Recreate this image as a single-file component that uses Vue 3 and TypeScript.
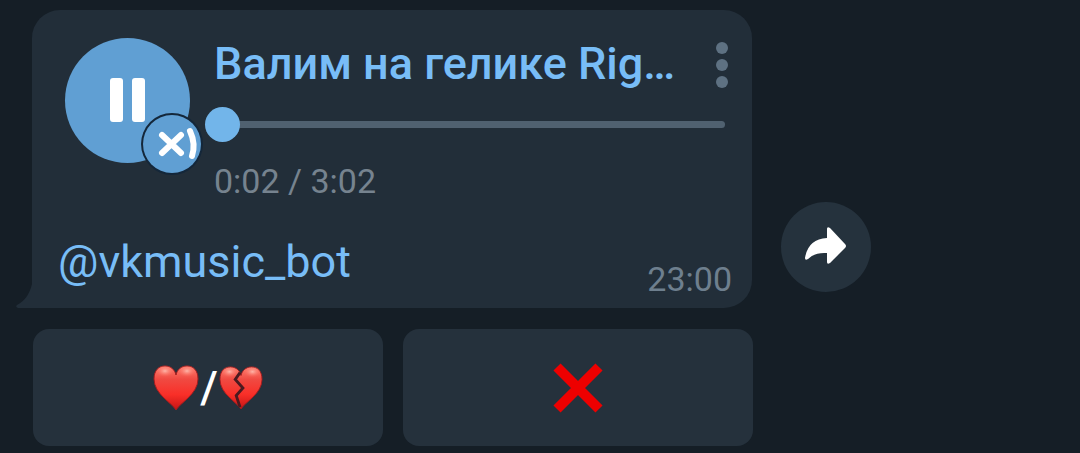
<script setup lang="ts">
import { computed, ref } from 'vue'

const elapsed = ref(2)
const duration = 182

const clock = (s: number): string =>
  `${Math.floor(s / 60)}:${String(s % 60).padStart(2, '0')}`

const progress = computed(() => `${clock(elapsed.value)} / ${clock(duration)}`)
</script>

<template>
  <main class="chat">
    <div class="message-row">
      <article class="bubble">
        <svg class="tail" viewBox="0 0 17 36" aria-hidden="true">
          <path d="M17 0 V36 H2 Q-1 35 1 33 C9 29 14 21 16 12 V0 Z" />
        </svg>
        <div class="player">
          <div class="cover">
            <button class="play" type="button" aria-label="Pause">
              <svg viewBox="0 0 125 125" aria-hidden="true">
                <rect x="45" y="40" width="13" height="44" rx="3" />
                <rect x="67" y="40" width="13" height="44" rx="3" />
              </svg>
            </button>
            <button class="badge" type="button" aria-label="Cancel download">
              <svg viewBox="0 0 58 58" aria-hidden="true">
                <path d="M19 20 L38 38 M38 20 L19 38" />
                <path d="M47 16 Q53 29 49 41" />
              </svg>
            </button>
          </div>
          <div class="track">
            <div class="heading">
              <h1 class="title">Валим на гелике Rig…</h1>
              <button class="more" type="button" aria-label="More">
                <i></i><i></i><i></i>
              </button>
            </div>
            <input
              v-model.number="elapsed"
              class="seek"
              type="range"
              min="0"
              :max="duration"
              aria-label="Position"
            />
            <p class="progress">{{ progress }}</p>
          </div>
        </div>
        <div class="footer">
          <a class="mention" href="#vkmusic_bot">@vkmusic_bot</a>
          <time class="sent">23:00</time>
        </div>
      </article>
      <button class="forward" type="button" aria-label="Forward">
        <svg viewBox="0 0 90 90" aria-hidden="true">
          <path d="M46 27 Q46 24 49 26 L64 42 Q66 44 64 46 L49 61 Q46 63 46 60 V51 Q34 50 27 57 Q24 59 24 56 Q27 37 46 36 Z" />
        </svg>
      </button>
    </div>
    <div class="keyboard">
      <button class="key" type="button" aria-label="Like or dislike">
        <svg class="heart" viewBox="0 0 46 46" aria-hidden="true">
          <defs>
            <linearGradient id="heart-fill" x1="0" y1="0" x2="0" y2="1">
              <stop offset="0" stop-color="#ff7f70" />
              <stop offset="0.3" stop-color="#f04a42" />
              <stop offset="0.65" stop-color="#f92f28" />
              <stop offset="1" stop-color="#c51414" />
            </linearGradient>
            <radialGradient id="heart-shine">
              <stop offset="0" stop-color="#ffc9bc" stop-opacity="0.8" />
              <stop offset="1" stop-color="#ff6a5c" stop-opacity="0" />
            </radialGradient>
          </defs>
          <path
            fill="url(#heart-fill)"
            stroke="#a31c1e"
            d="M23 45 C19 38 1 29 1 14 C1 5 6 1 12 1 C18 1 22 5 23 10 C24 5 28 1 34 1 C40 1 45 5 45 14 C45 29 27 38 23 45 Z"
          />
          <ellipse cx="12" cy="6" rx="9" ry="6" fill="url(#heart-shine)" />
          <ellipse cx="34" cy="6" rx="9" ry="6" fill="url(#heart-shine)" />
        </svg>
        <span class="slash">/</span>
        <svg class="heart broken" viewBox="0 0 46 46" aria-hidden="true">
          <path
            fill="url(#heart-fill)"
            stroke="#a31c1e"
            d="M23 45 C19 38 1 29 1 14 C1 5 6 1 12 1 C18 1 22 5 23 10 C24 5 28 1 34 1 C40 1 45 5 45 14 C45 29 27 38 23 45 Z"
          />
          <ellipse cx="11" cy="6" rx="9" ry="6" fill="url(#heart-shine)" />
          <ellipse cx="35" cy="6" rx="9" ry="6" fill="url(#heart-shine)" />
          <path class="crack" d="M22 7 L17 14 L25 23 L18 31 L22 43" />
        </svg>
      </button>
      <button class="key" type="button" aria-label="Close">
        <svg class="cross" viewBox="0 0 50 50" aria-hidden="true">
          <path d="M4 4 L46 46 M46 4 L4 46" />
        </svg>
      </button>
    </div>
  </main>
</template>

<style>
body {
  margin: 0;
  background: #151e26;
}
</style>

<style scoped>
.chat {
  box-sizing: border-box;
  padding: 10px 32px 7px;
  font-family: Roboto, "Noto Sans", sans-serif;
}

button {
  padding: 0;
  border: 0;
  color: inherit;
  font: inherit;
  cursor: pointer;
}

.message-row {
  display: flex;
  align-items: flex-end;
  gap: 29px;
}

.bubble {
  position: relative;
  box-sizing: border-box;
  width: 66.6667vw;
  padding: 28px 20px 0 26px;
  border-radius: 28px 28px 28px 0;
  background: #222e39;
}

.tail {
  position: absolute;
  right: 100%;
  bottom: 0;
  width: 17px;
  height: 36px;
  margin-right: -1px;
  fill: #222e39;
}

.player {
  display: flex;
  gap: 10px;
  padding-left: 7px;
}

.cover {
  position: relative;
  flex: none;
  width: 125px;
  height: 125px;
}

.play {
  display: block;
  width: 100%;
  height: 100%;
  border-radius: 50%;
  background: #609fd3;
}

.play svg,
.badge svg,
.forward svg {
  display: block;
  width: 100%;
  height: 100%;
}

.play svg {
  fill: #fff;
}

.badge {
  position: absolute;
  right: -11px;
  bottom: -10px;
  width: 58px;
  height: 58px;
  border-radius: 50%;
  background: #609fd3;
  box-shadow: 0 0 0 2px #14273a;
}

.badge svg {
  fill: none;
  stroke: #fff;
  stroke-width: 6;
  stroke-linecap: round;
}

.track {
  flex: 1;
  min-width: 0;
}

.heading {
  display: flex;
  justify-content: space-between;
  padding-left: 14px;
}

.title {
  margin: 0;
  overflow: hidden;
  color: #78bdf7;
  font-size: 45px;
  font-weight: 500;
  line-height: 52px;
  white-space: nowrap;
}

.more {
  display: flex;
  flex-direction: column;
  align-items: center;
  justify-content: center;
  gap: 5px;
  width: 20px;
  height: 54px;
  background: none;
}

.more i {
  width: 12px;
  height: 12px;
  border-radius: 50%;
  background: #5e7182;
}

.seek {
  display: block;
  box-sizing: border-box;
  width: calc(100% - 7px);
  height: 35px;
  margin: 15px 0 0;
  appearance: none;
  background: none;
}

.seek::-webkit-slider-runnable-track {
  height: 7px;
  border-radius: 4px;
  background: linear-gradient(90deg, transparent 12px, #506170 12px);
}

.seek::-webkit-slider-thumb {
  width: 35px;
  height: 35px;
  margin-top: -14px;
  border-radius: 50%;
  appearance: none;
  background: #72b5ea;
}

.progress {
  margin: 19px 0 0;
  padding-left: 14px;
  color: #76838f;
  font-size: 34px;
  line-height: 40px;
}

.footer {
  display: flex;
  align-items: flex-end;
  justify-content: space-between;
  padding-top: 34px;
}

.mention {
  padding-bottom: 19px;
  color: #78bdf7;
  font-size: 45px;
  line-height: 54px;
  text-decoration: none;
}

.sent {
  padding-bottom: 9px;
  color: #6e7f8e;
  font-size: 34px;
  line-height: 40px;
}

.forward {
  flex: none;
  width: 90px;
  height: 90px;
  margin-bottom: 16px;
  border-radius: 50%;
  background: #25323d;
}

.forward svg {
  fill: #fff;
}

.keyboard {
  display: flex;
  gap: 20px;
  width: 66.6667vw;
  margin: 21px 0 0 1px;
}

.key {
  display: flex;
  flex: 1;
  align-items: center;
  justify-content: center;
  height: 117px;
  border-radius: 16px;
  background: #25313c;
}

.heart {
  width: 46px;
  height: 46px;
}

.broken {
  width: 44px;
  height: 44px;
}

.crack {
  fill: none;
  stroke: #4a1a20;
  stroke-width: 3;
}

.slash {
  padding: 0 1px;
  color: #fff;
  font-size: 45px;
  font-weight: 500;
  line-height: 54px;
}

.cross {
  width: 50px;
  height: 50px;
  stroke: #ee0000;
  stroke-width: 10;
}
</style>
